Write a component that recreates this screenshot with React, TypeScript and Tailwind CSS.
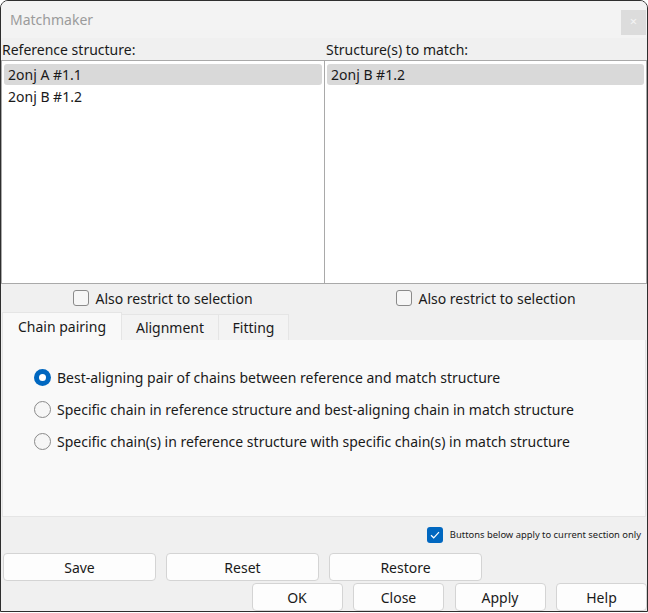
import React from 'react'

const font = { fontFamily: '"Noto Sans", "Open Sans", sans-serif' }

function Radio({ checked, label }: { checked?: boolean; label: string }) {
  return (
    <div className="flex items-center h-[32px]">
      {checked ? (
        <span className="w-[17px] h-[17px] rounded-full bg-[#0067c0] flex items-center justify-center">
          <span className="w-[7px] h-[7px] rounded-full bg-white" />
        </span>
      ) : (
        <span className="w-[17px] h-[17px] rounded-full border border-[#8a8a8a] bg-[#f6f6f6]" />
      )}
      <span className="ml-[6px] text-[14px] text-[#1a1a1a]">{label}</span>
    </div>
  )
}

function Btn({ label, w }: { label: string; w: string }) {
  return (
    <button
      className={`${w} h-[28px] bg-[#fdfdfd] border border-[#d4d4d4] rounded-[4px] text-[14px] text-[#1a1a1a]`}
    >
      {label}
    </button>
  )
}

function Check({ label }: { label: string }) {
  return (
    <div className="flex items-center">
      <span className="w-[16px] h-[16px] rounded-[3px] border border-[#8a8a8a] bg-[#f6f6f6]" />
      <span className="ml-[6px] text-[14px] text-[#1a1a1a]">{label}</span>
    </div>
  )
}

export default function App() {
  return (
    <div
      style={font}
      className="w-[648px] h-[612px] bg-[#f0f0f0] border border-[#2e2e2e] rounded-t-[8px] flex flex-col overflow-hidden"
    >
      {/* title bar */}
      <div className="h-[37px] bg-[#f3f3f3] flex items-center justify-between pl-[9px] pr-[1px]">
        <span className="text-[14px] text-[#9b9b9b]">Matchmaker</span>
        <span className="w-[25px] h-[25px] bg-[#dcdcdc] flex items-center justify-center text-[13px] text-[#f4f4f4] mt-[5px]">
          ×
        </span>
      </div>

      {/* labels */}
      <div className="flex h-[22px] items-center text-[14px] text-[#1a1a1a]">
        <span className="w-[324px] pl-[1px]">Reference structure:</span>
        <span className="pl-[1px]">Structure(s) to match:</span>
      </div>

      {/* lists */}
      <div className="flex h-[224px] border border-[#a9a9a9] bg-white">
        <div className="w-[323px] border-r border-[#a9a9a9] p-[2px] text-[14px] text-[#1a1a1a]">
          <div className="h-[21px] mt-[1px] bg-[#d9d9d9] rounded-[3px] pl-[4px] flex items-center">2onj A #1.1</div>
          <div className="h-[24px] pl-[4px] flex items-center -mt-[1px]">2onj B #1.2</div>
        </div>
        <div className="flex-1 p-[2px] text-[14px] text-[#1a1a1a]">
          <div className="h-[21px] mt-[1px] bg-[#d9d9d9] rounded-[3px] pl-[4px] flex items-center">2onj B #1.2</div>
        </div>
      </div>

      {/* restrict checkboxes */}
      <div className="flex h-[28px] items-center">
        <div className="w-[324px] flex justify-center">
          <Check label="Also restrict to selection" />
        </div>
        <div className="flex-1 flex justify-center">
          <Check label="Also restrict to selection" />
        </div>
      </div>

      {/* tabs */}
      <div className="flex h-[28px] pl-[1px] text-[14px] text-[#1a1a1a]">
        <div className="w-[120px] bg-[#f9f9f9] border border-b-0 border-[#e5e5e5] flex items-center justify-center">
          Chain pairing
        </div>
        <div className="w-[97px] mt-[2px] bg-[#f3f3f3] border border-l-0 border-b-0 border-[#e5e5e5] flex items-center justify-center">
          Alignment
        </div>
        <div className="w-[70px] mt-[2px] bg-[#f3f3f3] border border-l-0 border-b-0 border-[#e5e5e5] flex items-center justify-center">
          Fitting
        </div>
      </div>

      {/* tab panel */}
      <div className="h-[177px] mx-[1px] bg-[#f9f9f9] border border-t-0 border-[#e5e5e5] pl-[31px] pt-[21px]">
        <Radio checked label="Best-aligning pair of chains between reference and match structure" />
        <Radio label="Specific chain in reference structure and best-aligning chain in match structure" />
        <Radio label="Specific chain(s) in reference structure with specific chain(s) in match structure" />
      </div>

      {/* apply-to-section */}
      <div className="h-[36px] flex items-center justify-end pr-[6px]">
        <span className="w-[16px] h-[16px] rounded-[3px] bg-[#0067c0] flex items-center justify-center">
          <svg width="10" height="8" viewBox="0 0 10 8" fill="none">
            <path d="M1 4.2 L3.7 6.8 L9 1.2" stroke="white" strokeWidth="1.2" />
          </svg>
        </span>
        <span className="ml-[7px] text-[9.4px] text-[#1a1a1a]">Buttons below apply to current section only</span>
      </div>

      {/* buttons row 1 */}
      <div className="flex gap-[10px] pl-[2px]">
        <Btn label="Save" w="w-[153px]" />
        <Btn label="Reset" w="w-[153px]" />
        <Btn label="Restore" w="w-[153px]" />
      </div>

      {/* buttons row 2 */}
      <div className="flex gap-[10.5px] justify-end mt-[2px]">
        <Btn label="OK" w="w-[91px]" />
        <Btn label="Close" w="w-[91px]" />
        <Btn label="Apply" w="w-[91px]" />
        <Btn label="Help" w="w-[91px]" />
      </div>
    </div>
  )
}
